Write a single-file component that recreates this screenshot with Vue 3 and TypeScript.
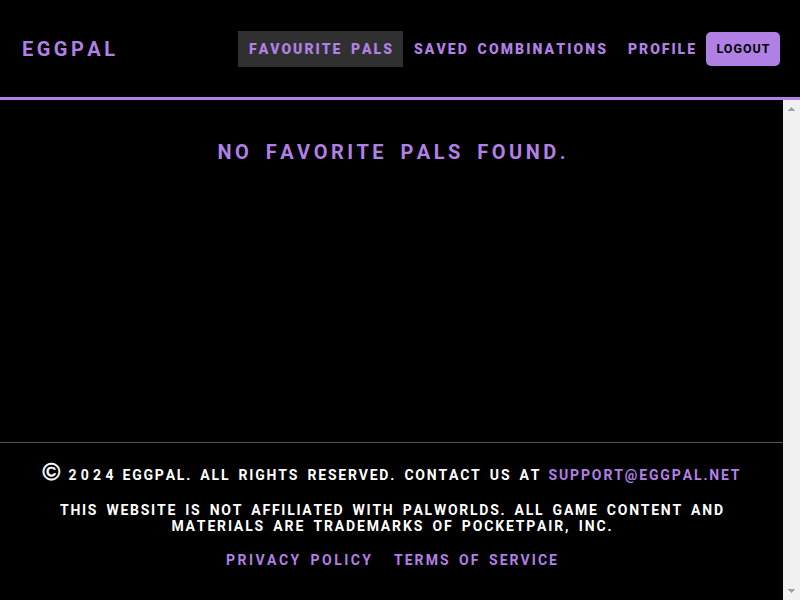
<script setup lang="ts">
import type { Directive } from 'vue'

interface NavItem { label: string; width: number; active?: boolean }

const navItems: NavItem[] = [
  { label: 'FAVOURITE PALS', width: 143, active: true },
  { label: 'SAVED COMBINATIONS', width: 192 },
  { label: 'PROFILE', width: 67 },
]

// Tracks a label out so that it spans exactly the given width.
const vTrack: Directive<HTMLElement, number> = {
  mounted(el, { value }) {
    el.style.letterSpacing = '0px'
    const natural = el.getBoundingClientRect().width
    const gaps = (el.textContent ?? '').trim().length - 1
    const spacing = (value - natural) / gaps
    el.style.letterSpacing = `${spacing}px`
    el.style.marginRight = `${-spacing}px`
  },
}
</script>

<template>
  <div class="page">
    <header class="header">
      <a class="logo"><span v-track="93" class="t">EGGPAL</span></a>
      <nav class="nav">
        <a v-for="item in navItems" :key="item.label" class="nav-link" :class="{ active: item.active }">
          <span v-track="item.width" class="t">{{ item.label }}</span>
        </a>
        <button class="logout"><span v-track="53" class="t">LOGOUT</span></button>
      </nav>
    </header>
    <div class="body">
      <div class="content">
        <main class="main">
          <h1><span v-track="348" class="t">NO FAVORITE PALS FOUND.</span></h1>
        </main>
        <footer class="footer">
          <p class="contact">
            <span class="copy">©</span>
            <span v-track="45" class="t year">2024</span>
            <span class="gap" />
            <span v-track="417" class="t">EGGPAL. ALL RIGHTS RESERVED. CONTACT US AT</span>
            <a><span v-track="191" class="t">SUPPORT@EGGPAL.NET</span></a>
          </p>
          <p class="legal">
            <span v-track="663" class="t">THIS WEBSITE IS NOT AFFILIATED WITH PALWORLDS. ALL GAME CONTENT AND</span>
            <span v-track="440" class="t">MATERIALS ARE TRADEMARKS OF POCKETPAIR, INC.</span>
          </p>
          <p class="links">
            <a><span v-track="145" class="t">PRIVACY POLICY</span></a>
            <a><span v-track="163" class="t">TERMS OF SERVICE</span></a>
          </p>
        </footer>
      </div>
      <div class="scrollbar">
        <svg viewBox="0 0 7 4" shape-rendering="crispEdges"><path d="M3 0h1v1h1v1h1v1h1v1H0V3h1V2h1V1h1z" /></svg>
        <svg viewBox="0 0 7 4" shape-rendering="crispEdges"><path d="M0 0h7v1H6v1H5v1H4v1H3V3H2V2H1V1H0z" /></svg>
      </div>
    </div>
  </div>
</template>

<style>
body { background: #000; overflow: hidden; }
</style>

<style scoped>
.page {
  width: 800px;
  height: 600px;
  display: flex;
  flex-direction: column;
  background: #000;
  color: #fff;
  font: 700 14px/16px Roboto, sans-serif;
  font-kerning: none;
}
.t { display: inline-block; white-space: nowrap; word-spacing: 3px; }
a, h1 { color: #b180e5; }
.header {
  box-sizing: border-box;
  height: 100px;
  flex: none;
  display: flex;
  align-items: center;
  justify-content: space-between;
  padding: 0 20px 0 22px;
  border-bottom: 3px solid #b180e5;
}
.logo { font-size: 20px; line-height: 24px; font-weight: 700; }
.nav { display: flex; align-items: center; }
.nav-link { padding: 10px 11px; display: flex; font-weight: 900; }
.nav-link.active { background: #303030; }
.logout {
  height: 34px;
  width: 74px;
  padding: 0;
  border: 0;
  border-radius: 5px;
  background: #b180e5;
  color: #000;
  font: 700 12.5px/16px Roboto, sans-serif;
  display: flex;
  align-items: center;
  justify-content: center;
}
.body { flex: 1; display: flex; min-height: 0; }
.content { flex: 1; display: flex; flex-direction: column; }
.main { flex: 1; padding-top: 40px; }
h1 { margin: 0; font-size: 20px; line-height: 24px; font-weight: 700; display: flex; justify-content: center; }
h1 .t { word-spacing: 5px; }
.footer { height: 157px; border-top: 1px solid #555; }
p { margin: 0; display: flex; justify-content: center; }
.contact { padding-top: 24px; height: 35px; }
.copy {
  width: 18px;
  margin: -3px 8px 0 -1px;
  font: 400 24px/16px "Liberation Sans", Arial, sans-serif;
  -webkit-text-stroke: 0.6px #fff;
}
.gap { width: 9px; }
.contact a { margin-left: 9px; }
.legal { flex-direction: column; align-items: center; }
.links { padding-top: 18px; gap: 23px; }
.scrollbar {
  width: 17px;
  box-sizing: border-box;
  padding: 7px 5px;
  background: #f1f1f1;
  display: flex;
  flex-direction: column;
  justify-content: space-between;
}
.scrollbar svg { width: 7px; height: 4px; fill: #a3a3a3; }
</style>
